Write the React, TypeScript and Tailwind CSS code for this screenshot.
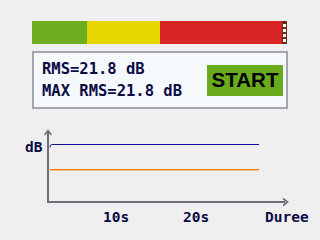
import React from "react";

const mono = { fontFamily: '"DejaVu Sans Mono", "Liberation Mono", monospace' };

function LevelBar() {
  return (
    <div className="ml-[32px] flex h-[23px] w-[255px]">
      <div className="w-[55px] bg-[#6cae1f]" />
      <div className="w-[73px] bg-[#e4d800]" />
      <div className="w-[122px] bg-[#d82626]" />
      <div className="flex w-[5px] flex-col justify-center gap-[2px] bg-[#6b2a1a] px-[1px]">
        <div className="h-[3px] bg-white" />
        <div className="h-[3px] bg-white" />
        <div className="h-[3px] bg-white" />
        <div className="h-[3px] bg-white" />
      </div>
    </div>
  );
}

function Readout() {
  return (
    <div className="ml-[32px] mt-[7px] flex h-[58px] w-[256px] items-center justify-between border-2 border-[#a3a6ad] bg-[#f5f9fb] pl-[8px] pr-[3px]">
      <div
        className="flex flex-col gap-[8px] text-[15.5px] font-bold leading-[14px] text-[#0b0b45]"
        style={mono}
      >
        <span>RMS=21.8 dB</span>
        <span>MAX RMS=21.8 dB</span>
      </div>
      <button
        type="button"
        className="flex h-[31px] w-[76px] items-center justify-center bg-[#6aaa1d] text-[20.5px] font-bold text-black"
        style={{ fontFamily: '"Liberation Sans", Arial, sans-serif' }}
      >
        START
      </button>
    </div>
  );
}

function Chart() {
  return (
    <svg width={320} height={120} className="mt-[11px] block">
      <g fill="none">
        <path d="M50 27.5 Q50 24.5 52 24.5 L259 24.5" stroke="#10109a" strokeWidth={1} />
        <rect x={50} y={49} width={209} height={1} fill="#ff7a00" />
        <rect x={50} y={50} width={209} height={1} fill="#f7c48c" />
        <path d="M48 13 L48 82 L284 82" stroke="#6e6e78" strokeWidth={2} strokeLinecap="square" />
        <path d="M44.5 15 L48 10.5 L51.5 15" stroke="#6e6e78" strokeWidth={1.6} />
        <path d="M283 78.5 L287.5 82 L283 85.5" stroke="#6e6e78" strokeWidth={1.6} />
      </g>
      <g fill="#0b0b45" fontWeight="bold" fontSize={14.5} style={mono}>
        <text x={25} y={32}>dB</text>
        <text x={103} y={102}>10s</text>
        <text x={183} y={102}>20s</text>
        <text x={265} y={102}>Duree</text>
      </g>
    </svg>
  );
}

export default function App() {
  return (
    <div className="h-[240px] w-[320px] overflow-hidden bg-[#efefef] pt-[21px]">
      <LevelBar />
      <Readout />
      <Chart />
    </div>
  );
}
